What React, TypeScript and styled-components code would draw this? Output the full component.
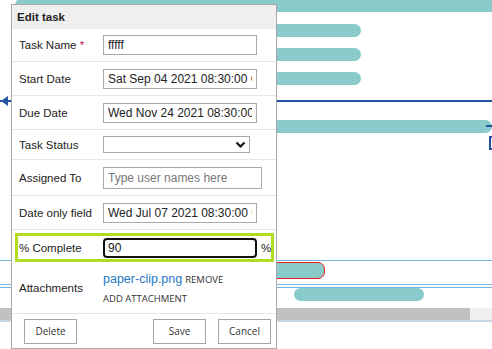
import React from "react";
import styled, { createGlobalStyle } from "styled-components";

const Global = createGlobalStyle`
	html, body {
		margin: 0;
		padding: 0;
		background: #fff;
		overflow: hidden;
	}
	* {
		box-sizing: border-box;
	}
`;

const teal = "#89cbca";
const navy = "#23529f";
const sky = "#78b4e0";

const Canvas = styled.div`
	position: relative;
	width: 492px;
	height: 349px;
	overflow: hidden;
	font-family: "Liberation Sans", Arial, sans-serif;
`;

/* gantt chart behind the dialog */
const Bar = styled.div<{ $left: number; $top: number; $width: number; $height?: number; $danger?: boolean }>`
	position: absolute;
	left: ${ p => p.$left }px;
	top: ${ p => p.$top }px;
	width: ${ p => p.$width }px;
	height: ${ p => p.$height ?? 13 }px;
	background: ${ teal };
	border-radius: 7px;
	border: ${ p => p.$danger ? "1.5px solid #f21b1b" : "none" };
`;

const HLine = styled.div<{ $top: number; $color: string; $size?: number }>`
	position: absolute;
	left: 0;
	right: 0;
	top: ${ p => p.$top }px;
	height: ${ p => p.$size ?? 1 }px;
	background: ${ p => p.$color };
`;

const ArrowHead = styled.div`
	position: absolute;
	left: 1px;
	top: 96px;
	width: 0;
	height: 0;
	border-top: 5px solid transparent;
	border-bottom: 5px solid transparent;
	border-right: 7px solid ${ navy };
`;

const Dot = styled.div`
	position: absolute;
	left: 486px;
	top: 125px;
	width: 6px;
	height: 2px;
	background: ${ navy };
`;

const Marker = styled.div`
	position: absolute;
	left: 489px;
	top: 136px;
	width: 10px;
	height: 14px;
	border: 2px solid ${ navy };
`;

const Scrollbar = styled.div`
	position: absolute;
	left: 0;
	right: 0;
	top: 308px;
	height: 14px;
	display: flex;
	border-bottom: 2px solid #c9d6e4;
	background: #f0f0f0;
`;

const Thumb = styled.div`
	width: 470px;
	background: #c1c1c1;
`;

/* dialog */
const Dialog = styled.div`
	position: absolute;
	left: 11px;
	top: 4px;
	width: 266px;
	height: 345px;
	border: 1px solid #a8a8a8;
	background: #fff;
	display: flex;
	flex-direction: column;
	color: #222;
	font-size: 11.5px;
`;

const Header = styled.div`
	height: 24px;
	padding-left: 5px;
	display: flex;
	align-items: center;
	background: #efefef;
	font-weight: bold;
	font-size: 11.5px;
	color: #222;
`;

const Row = styled.div<{ $h: number; $highlight?: boolean }>`
	height: ${ p => p.$h }px;
	display: grid;
	grid-template-columns: 84px 1fr;
	align-items: center;
	border-bottom: 1px solid #e6e6e6;
	padding-left: 7px;
	${ p => p.$highlight && `
		margin: 3px 2px 1px 3px;
		border: 3px solid #b0dc22;
		padding-left: 1px;
	` }
`;

const Label = styled.span`
	white-space: nowrap;
`;

const Req = styled.span`
	color: #c2185b;
`;

const Input = styled.input<{ $w: number; $h?: number }>`
	width: ${ p => p.$w }px;
	height: ${ p => p.$h ?? 20 }px;
	border: 1px solid #a9a9a9;
	padding: 0 4px;
	font-family: "Liberation Sans", Arial, sans-serif;
	font-size: 12px;
	color: #222;
	outline: none;
	background: #fff;
	&::placeholder {
		color: #777;
	}
`;

const StrongInput = styled(Input)`
	border: 2px solid #111;
	border-radius: 4px;
	padding: 0 3px;
`;

const Inline = styled.div`
	display: flex;
	align-items: center;
	gap: 4px;
`;

const SelectBox = styled.div`
	width: 147px;
	height: 17px;
	border: 1px solid #a9a9a9;
	display: flex;
	align-items: center;
	justify-content: flex-end;
	padding-right: 3px;
`;

const Attach = styled.div`
	display: flex;
	flex-direction: column;
	gap: 6px;
`;

const FileLine = styled.div`
	display: flex;
	align-items: baseline;
	gap: 3px;
`;

const FileLink = styled.span`
	color: #2a78c2;
	font-size: 12.5px;
`;

const SmallAction = styled.span`
	font-family: "Open Sans", sans-serif;
	font-size: 9.5px;
	color: #333;
`;

const Footer = styled.div`
	flex: 1;
	display: flex;
	align-items: center;
	padding: 0 5px 0 12px;
	gap: 12px;
`;

const Spacer = styled.div`
	flex: 1;
`;

const Button = styled.button`
	width: 53px;
	height: 25px;
	border: 1px solid #a6a6a6;
	background: #fff;
	font-family: "Open Sans", sans-serif;
	font-size: 10px;
	color: #333;
	padding: 0;
`;

export default function App() {
	return (
		<Canvas>
			<Global/>

			<Bar $left={15} $top={-2} $width={490} $height={14}/>
			<Bar $left={200} $top={24} $width={161}/>
			<Bar $left={200} $top={48} $width={161}/>
			<Bar $left={200} $top={72} $width={161}/>
			<HLine $top={100} $color={navy} $size={2}/>
			<ArrowHead/>
			<Bar $left={200} $top={120} $width={292}/>
			<Dot/>
			<Marker/>
			<HLine $top={260} $color={sky}/>
			<Bar $left={200} $top={262} $width={125} $height={17} $danger/>
			<HLine $top={284} $color={sky}/>
			<HLine $top={287} $color={sky}/>
			<Bar $left={294} $top={288} $width={130}/>
			<Scrollbar><Thumb/></Scrollbar>

			<Dialog>
				<Header>Edit task</Header>
				<Row $h={33}>
					<Label>Task Name <Req>*</Req></Label>
					<Input $w={154} defaultValue="fffff"/>
				</Row>
				<Row $h={34}>
					<Label>Start Date</Label>
					<Input $w={154} defaultValue="Sat Sep 04 2021 08:30:00 GMT+0530"/>
				</Row>
				<Row $h={34}>
					<Label>Due Date</Label>
					<Input $w={154} defaultValue="Wed Nov 24 2021 08:30:00 GMT+0530"/>
				</Row>
				<Row $h={30}>
					<Label>Task Status</Label>
					<SelectBox>
						<svg width="11" height="8" viewBox="0 0 11 8">
							<path d="M1.5 1.5 L5.5 5.5 L9.5 1.5" fill="none" stroke="#111" strokeWidth="2.2"/>
						</svg>
					</SelectBox>
				</Row>
				<Row $h={36}>
					<Label>Assigned To</Label>
					<Input $w={159} $h={22} placeholder="Type user names here"/>
				</Row>
				<Row $h={34}>
					<Label>Date only field</Label>
					<Input $w={154} defaultValue="Wed Jul 07 2021 08:30:00 GMT+0530"/>
				</Row>
				<Row $h={29} $highlight>
					<Label>% Complete</Label>
					<Inline>
						<StrongInput $w={154} defaultValue="90"/>
						<span>%</span>
					</Inline>
				</Row>
				<Row $h={51}>
					<Label>Attachments</Label>
					<Attach>
						<FileLine>
							<FileLink>paper-clip.png</FileLink>
							<SmallAction>REMOVE</SmallAction>
						</FileLine>
						<SmallAction>ADD ATTACHMENT</SmallAction>
					</Attach>
				</Row>
				<Footer>
					<Button>Delete</Button>
					<Spacer/>
					<Button>Save</Button>
					<Button>Cancel</Button>
				</Footer>
			</Dialog>
		</Canvas>
	);
}
